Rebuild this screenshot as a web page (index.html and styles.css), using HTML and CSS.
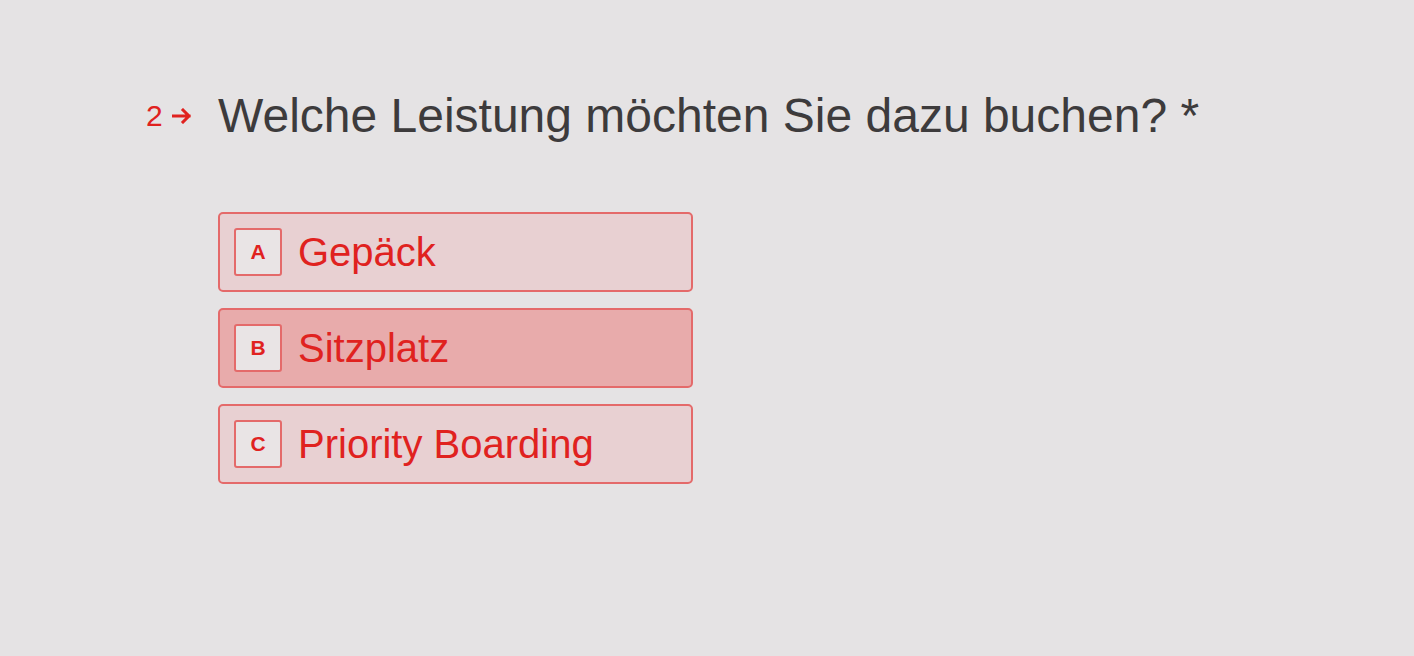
FILE: index.html
```html
<!DOCTYPE html>
<html lang="de">

<head>
    <meta charset="UTF-8">
    <meta name="viewport" content="width=device-width, initial-scale=1.0">
    <title>Leistung</title>
    <link rel="stylesheet" href="styles.css">
</head>

<body>
    <div class="question">
        <div class="counter">
            <span class="num">2</span>
            <svg class="arrow" width="20" height="16" viewBox="0 0 20 16">
                <path d="M1 8 H17 M11 2 L17 8 L11 14" fill="none" stroke="#e0221f" stroke-width="3" stroke-linecap="square" />
            </svg>
        </div>
        <div class="content">
            <h1>Welche Leistung möchten Sie dazu buchen? *</h1>

            <div class="choices">
                <div class="choice">
                    <span class="key">A</span>
                    <span class="label">Gepäck</span>
                </div>
                <div class="choice selected">
                    <span class="key">B</span>
                    <span class="label">Sitzplatz</span>
                </div>
                <div class="choice">
                    <span class="key">C</span>
                    <span class="label">Priority Boarding</span>
                </div>
            </div>
        </div>
    </div>
</body>

</html>
```

FILE: styles.css
```css
body {
    font-family: "Liberation Sans", Arial, sans-serif;
    margin: 0;
    padding: 0;
    background-color: #e5e3e4;
    height: 656px;
}

.question {
    display: flex;
    padding: 88px 0 0 146px;
}

.counter {
    display: flex;
    align-items: center;
    height: 56px;
    width: 72px;
    color: #e0221f;
}

.num {
    font-size: 30px;
    margin-right: 9px;
}

.arrow {
    margin-top: 0;
}

h1 {
    margin: 0;
    font-size: 48px;
    font-weight: normal;
    color: #3d3b3c;
    line-height: 56px;
}

.choices {
    display: flex;
    flex-direction: column;
    gap: 16px;
    margin-top: 68px;
    width: 475px;
}

.choice {
    display: flex;
    align-items: center;
    height: 80px;
    box-sizing: border-box;
    padding: 0 14px;
    border: 2px solid #e46a6a;
    border-radius: 5px;
    background-color: #e8d0d2;
    color: #e0221f;
    cursor: pointer;
}

.choice.selected {
    background-color: #e8abab;
}

.key {
    display: flex;
    align-items: center;
    justify-content: center;
    width: 48px;
    height: 48px;
    box-sizing: border-box;
    border: 2px solid #e46a6a;
    border-radius: 3px;
    background-color: #e9e4e5;
    font-size: 21px;
    font-weight: bold;
    margin-right: 16px;
}

.label {
    font-size: 40px;
}
```
